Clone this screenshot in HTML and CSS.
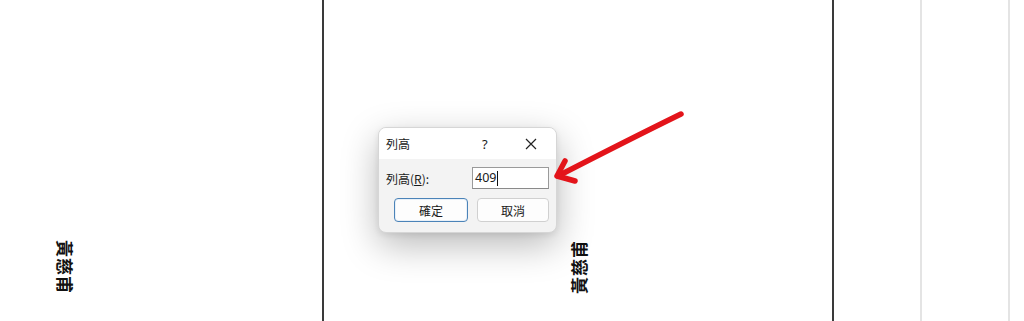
FILE: index.html
```html
<!DOCTYPE html>
<html lang="zh-Hant">
<head>
<meta charset="utf-8">
<link rel="stylesheet" href="styles.css">
</head>
<body>
<div class="sheet">
  <div class="col col-a">
    <span class="name name-down">黃慈甫</span>
  </div>
  <div class="col col-b">
    <span class="name name-up">黃慈甫</span>
  </div>
  <div class="col col-c"></div>
  <div class="col col-d"></div>
  <div class="col col-e"></div>

  <div class="dialog">
    <div class="titlebar">
      <span class="title">列高</span>
      <span class="help">?</span>
      <svg class="close" width="12" height="12" viewBox="0 0 12 12"><path d="M1 1L11 11M11 1L1 11" stroke="#222" stroke-width="1.2" fill="none"/></svg>
    </div>
    <div class="body">
      <div class="row">
        <span class="label">列高(<u>R</u>):</span>
        <div class="input">409<span class="caret"></span></div>
      </div>
      <div class="buttons">
        <div class="btn primary">確定</div>
        <div class="btn">取消</div>
      </div>
    </div>
  </div>

  <svg class="arrow" width="140" height="80" viewBox="0 0 140 80">
    <g stroke="#e3141a" stroke-width="5.5" stroke-linecap="round" stroke-linejoin="round" fill="none">
      <path d="M127 5 Q72 32 4 67"/>
      <path d="M11 52 L3 67 L21 72"/>
    </g>
  </svg>
</div>
</body>
</html>
```
FILE: styles.css
```css
html, body {
  margin: 0;
  padding: 0;
  background: #fff;
}
.sheet {
  position: relative;
  width: 1024px;
  height: 321px;
  display: flex;
  overflow: hidden;
  font-family: "Noto Sans CJK TC", "Noto Sans", sans-serif;
}
.col {
  height: 321px;
  box-sizing: border-box;
  display: flex;
  align-items: flex-end;
}
.col-a {
  width: 324px;
  border-right: 2px solid #3a3a3a;
  padding: 0 0 27px 57px;
}
.col-b {
  width: 510px;
  border-right: 2px solid #3a3a3a;
  justify-content: center;
  padding-bottom: 27px;
}
.col-c {
  width: 88px;
  border-right: 2px solid #e4e4e4;
}
.col-d {
  width: 88px;
  border-right: 2px solid #e4e4e4;
}
.col-e {
  flex: 1;
}
.name {
  writing-mode: vertical-rl;
  text-orientation: sideways;
  font-size: 17px;
  font-weight: 700;
  color: #111;
  letter-spacing: 1px;
  line-height: 17px;
}
.name-up {
  transform: rotate(180deg);
}
.dialog {
  position: absolute;
  left: 378px;
  top: 127px;
  width: 179px;
  height: 106px;
  border-radius: 8px;
  border: 1px solid #d6d6d6;
  box-sizing: border-box;
  overflow: hidden;
  background: #f3f3f3;
  box-shadow: 0 12px 36px rgba(0, 0, 0, 0.28), 0 2px 6px rgba(0, 0, 0, 0.08);
  font-size: 12px;
  color: #1a1a1a;
}
.titlebar {
  height: 31px;
  background: #fff;
  display: flex;
  align-items: center;
  padding-left: 7px;
}
.title {
  width: 96px;
}
.help {
  font-family: "Noto Sans", sans-serif;
  font-size: 13px;
  width: 43px;
}
.body {
  padding: 8px 7px 0 7px;
}
.row {
  display: flex;
  align-items: center;
  justify-content: space-between;
}
.label {
  font-size: 12px;
}
.input {
  width: 77px;
  height: 22px;
  box-sizing: border-box;
  background: #fff;
  border: 1px solid #9a9a9a;
  border-bottom-color: #8a8a8a;
  font-family: "Noto Sans", sans-serif;
  font-size: 12.5px;
  line-height: 20px;
  padding-left: 2px;
  display: flex;
  align-items: center;
}
.caret {
  display: inline-block;
  width: 1px;
  height: 15px;
  background: #111;
  margin-left: 1px;
}
.buttons {
  display: flex;
  justify-content: space-between;
  margin-top: 9px;
  padding-left: 8px;
}
.btn {
  width: 72px;
  height: 24px;
  box-sizing: border-box;
  border: 1px solid #d0d0d0;
  border-radius: 4px;
  background: #fdfdfd;
  display: flex;
  align-items: center;
  justify-content: center;
  font-size: 12px;
}
.btn.primary {
  width: 74px;
  border: 1px solid #4b83b8;
  box-shadow: inset 0 0 0 1px #e8f0f8;
}
.arrow {
  position: absolute;
  left: 554px;
  top: 109px;
}
```
